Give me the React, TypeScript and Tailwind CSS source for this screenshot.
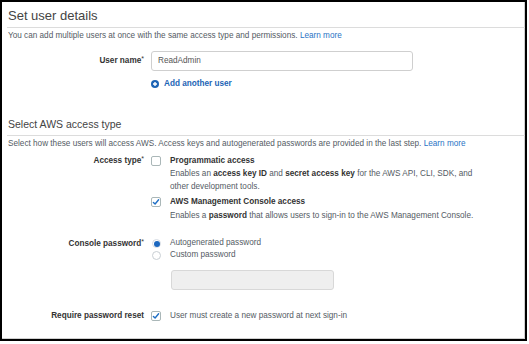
import React from "react";

const font = { fontFamily: '"Liberation Sans", Arial, sans-serif' };

function Check({ checked }: { checked?: boolean }) {
  return (
    <div className="w-[10px] h-[10px] rounded-[2px] border border-[#aab7b8] bg-white flex items-center justify-center shrink-0">
      {checked && (
        <svg width="8" height="8" viewBox="0 0 8 8">
          <path d="M1.4 4.4 L3.1 6 L6.6 1.8" fill="none" stroke="#1f6fc5" strokeWidth="1.4" strokeLinecap="round" strokeLinejoin="round" />
        </svg>
      )}
    </div>
  );
}

function Radio({ checked }: { checked?: boolean }) {
  return (
    <div className={"w-[9px] h-[9px] rounded-full border flex items-center justify-center shrink-0 " + (checked ? "border-[#d5dbe3] bg-white" : "border-[#c9cfd4] bg-white")}>
      {checked && <div className="w-[6px] h-[6px] rounded-full bg-[#1b67bf]" />}
    </div>
  );
}

function Star() {
  return <span className="relative top-[-2px] text-[7px] font-normal">*</span>;
}

export default function App() {
  return (
    <div style={font} className="w-[529px] h-[344px] bg-white">
      <div className="w-[527px] h-[341px] border-2 border-black bg-white shadow-[inset_-1px_-1px_0_#d0d0d0] flex flex-col text-[8.2px] text-[#545b64]">
        {/* Section 1 */}
        <div className="pl-[6px] pt-[6px] text-[13px] leading-[15px] text-[#444]">Set user details</div>
        <div className="ml-[5px] mt-[4px] border-t border-[#dcdcdc]" />
        <div className="pl-[6px] mt-[3px] leading-[10px]">
          You can add multiple users at once with the same access type and permissions.{" "}
          <span className="text-[#2a73c5]">Learn more</span>
        </div>

        <div className="mt-[10px] flex items-center">
          <div className="w-[142px] text-right font-bold text-[#333]">User name<Star /></div>
          <div className="ml-[7px] w-[262px] h-[20px] rounded-[3px] border border-[#cfcfcf] flex items-center pl-[6px] text-[#555]">ReadAdmin</div>
        </div>

        <div className="mt-[8px] flex items-center leading-[10px]">
          <div className="w-[142px]" />
          <div className="ml-[7px] flex items-center gap-[5px]">
            <svg width="8" height="8" viewBox="0 0 8 8">
              <circle cx="4" cy="4" r="4" fill="#1c64b5" />
              <path d="M4 2 V6 M2 4 H6" stroke="white" strokeWidth="1.4" />
            </svg>
            <span className="font-bold text-[#1c64b5]">Add another user</span>
          </div>
        </div>

        {/* Section 2 */}
        <div className="pl-[6px] mt-[29px] text-[10.5px] leading-[13px] text-[#444]">Select AWS access type</div>
        <div className="ml-[5px] mt-[4px] border-t border-[#dcdcdc]" />
        <div className="pl-[6px] mt-[3px] leading-[10px]">
          Select how these users will access AWS. Access keys and autogenerated passwords are provided in the last step.{" "}
          <span className="text-[#2a73c5]">Learn more</span>
        </div>

        <div className="mt-[7px] flex items-start">
          <div className="w-[142px] text-right font-bold text-[#333] leading-[10px]">Access type<Star /></div>
          <div className="ml-[7px] flex flex-col">
            <div className="flex items-start">
              <div className="w-[19px]"><Check /></div>
              <div>
                <div className="font-bold text-[#333] leading-[10px]">Programmatic access</div>
                <div className="leading-[13px] mt-[0.5px] whitespace-nowrap">
                  Enables an <b className="text-[#333]">access key ID</b> and <b className="text-[#333]">secret access key</b> for the AWS API, CLI, SDK, and
                </div>
                <div className="leading-[13px]">other development tools.</div>
              </div>
            </div>
            <div className="flex items-start mt-[4.5px]">
              <div className="w-[19px]"><Check checked /></div>
              <div>
                <div className="font-bold text-[#333] leading-[10px]">AWS Management Console access</div>
                <div className="leading-[13px] mt-[1.5px] whitespace-nowrap">
                  Enables a <b className="text-[#333]">password</b> that allows users to sign-in to the AWS Management Console.
                </div>
              </div>
            </div>
          </div>
        </div>

        <div className="mt-[16px] flex items-start">
          <div className="w-[142px] text-right font-bold text-[#333] leading-[12px]">Console password<Star /></div>
          <div className="ml-[7px] flex flex-col">
            <div className="flex items-center h-[12px]">
              <div className="w-[19px] pl-[1px]"><Radio checked /></div>
              <span>Autogenerated password</span>
            </div>
            <div className="flex items-center h-[12px]">
              <div className="w-[19px] pl-[1px]"><Radio /></div>
              <span>Custom password</span>
            </div>
            <div className="mt-[8px] ml-[20px] w-[163px] h-[20px] rounded-[3px] border border-[#d8d8d8] bg-[#efefef]" />
          </div>
        </div>

        <div className="mt-[21px] flex items-center leading-[10px]">
          <div className="w-[142px] text-right font-bold text-[#333]">Require password reset</div>
          <div className="ml-[7px] flex items-center">
            <div className="w-[19px]"><Check checked /></div>
            <span>User must create a new password at next sign-in</span>
          </div>
        </div>
      </div>
    </div>
  );
}
